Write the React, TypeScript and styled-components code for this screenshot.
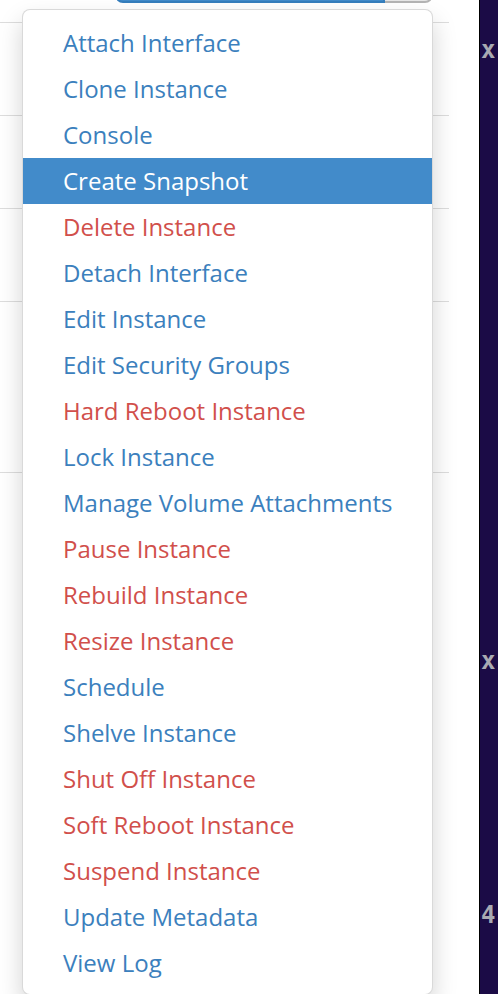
import React, {FunctionComponent} from "react";
import styled, {createGlobalStyle} from "styled-components";

const GlobalStyle = createGlobalStyle`
  html, body {
    margin: 0;
    padding: 0;
    background: #ffffff;
    overflow: hidden;
  }
`;

type Tone = "link" | "danger";

interface ActionItem {
    label: string;
    tone: Tone;
    active?: boolean;
}

const actions: ActionItem[] = [
    {label: "Attach Interface", tone: "link"},
    {label: "Clone Instance", tone: "link"},
    {label: "Console", tone: "link"},
    {label: "Create Snapshot", tone: "link", active: true},
    {label: "Delete Instance", tone: "danger"},
    {label: "Detach Interface", tone: "link"},
    {label: "Edit Instance", tone: "link"},
    {label: "Edit Security Groups", tone: "link"},
    {label: "Hard Reboot Instance", tone: "danger"},
    {label: "Lock Instance", tone: "link"},
    {label: "Manage Volume Attachments", tone: "link"},
    {label: "Pause Instance", tone: "danger"},
    {label: "Rebuild Instance", tone: "danger"},
    {label: "Resize Instance", tone: "danger"},
    {label: "Schedule", tone: "link"},
    {label: "Shelve Instance", tone: "link"},
    {label: "Shut Off Instance", tone: "danger"},
    {label: "Soft Reboot Instance", tone: "danger"},
    {label: "Suspend Instance", tone: "danger"},
    {label: "Update Metadata", tone: "link"},
    {label: "View Log", tone: "link"},
];

const Screen = styled.div`
  display: flex;
  height: 994px;
  width: 498px;
  overflow: hidden;
  font-family: "Open Sans", "Liberation Sans", sans-serif;
`;

const Main = styled.div`
  position: relative;
  flex: 1;
  padding-right: 30px;
  background: #ffffff;
`;

const Table = styled.div`
  display: flex;
  flex-direction: column;
`;

const Row = styled.div<{ $height: number; $top?: boolean }>`
  display: flex;
  align-items: ${p => p.$top ? "flex-end" : "flex-start"};
  height: ${p => p.$height}px;
  box-sizing: border-box;
  padding: ${p => p.$top ? "0 0 19px 115px" : "18px 0 0 115px"};
  border-top: ${p => p.$top ? "none" : "1px solid #dddddd"};
  overflow: hidden;
`;

const ButtonGroup = styled.div`
  display: flex;
  flex-shrink: 0;
  height: 57px;
`;

const MainButton = styled.div`
  width: 270px;
  box-sizing: border-box;
  background: #428bca;
  border: 2px solid #357ebd;
  border-radius: 8px 0 0 8px;
`;

const CaretButton = styled.div`
  width: 48px;
  box-sizing: border-box;
  background: #e6e6e6;
  border: 2px solid #b4b4b4;
  border-left: none;
  border-radius: 0 8px 8px 0;
`;

const Menu = styled.ul`
  position: absolute;
  top: 9px;
  left: 22px;
  width: 411px;
  box-sizing: border-box;
  margin: 0;
  padding: 10px 0 8px;
  list-style: none;
  background: #ffffff;
  border: 1px solid rgba(0, 0, 0, 0.15);
  border-radius: 8px;
  box-shadow: 0 12px 24px rgba(0, 0, 0, 0.175);
`;

const MenuItem = styled.li<{ $tone: Tone; $active?: boolean }>`
  height: 46px;
  line-height: 46px;
  padding-left: 40px;
  font-size: 24px;
  white-space: nowrap;
  color: ${p => p.$active ? "#ffffff" : p.$tone === "danger" ? "#d14f4b" : "#3b80bd"};
  background: ${p => p.$active ? "#428bca" : "transparent"};
`;

const Console = styled.div`
  display: flex;
  flex-direction: column;
  width: 18px;
  flex-shrink: 0;
  background: #1b0b46;
  border-left: 1px solid #000000;
  font-family: "DejaVu Sans Mono", monospace;
  font-weight: bold;
  font-size: 24px;
  color: #a9a9b2;
`;

const ConsoleChar = styled.span<{ $top: number }>`
  margin-top: ${p => p.$top}px;
  padding-left: 1px;
  line-height: 28px;
`;

const PingRow: FunctionComponent<{ height: number; top?: boolean; withButton?: boolean }> = ({height, top, withButton}) => (
    <Row $height={height} $top={top}>
        {withButton && <ButtonGroup>
            <MainButton/>
            <CaretButton/>
        </ButtonGroup>}
    </Row>
);

const App: FunctionComponent = () => {
    return <>
        <GlobalStyle/>
        <Screen>
            <Main>
                <Table>
                    <PingRow height={22} top withButton/>
                    <PingRow height={93} withButton/>
                    <PingRow height={93} withButton/>
                    <PingRow height={93} withButton/>
                    <PingRow height={171}/>
                    <PingRow height={522}/>
                </Table>
                <Menu>
                    {actions.map(a =>
                        <MenuItem key={a.label} $tone={a.tone} $active={a.active}>{a.label}</MenuItem>
                    )}
                </Menu>
            </Main>
            <Console>
                <ConsoleChar $top={36}>x</ConsoleChar>
                <ConsoleChar $top={583}>x</ConsoleChar>
                <ConsoleChar $top={226}>4</ConsoleChar>
            </Console>
        </Screen>
    </>;
};

export default App;
